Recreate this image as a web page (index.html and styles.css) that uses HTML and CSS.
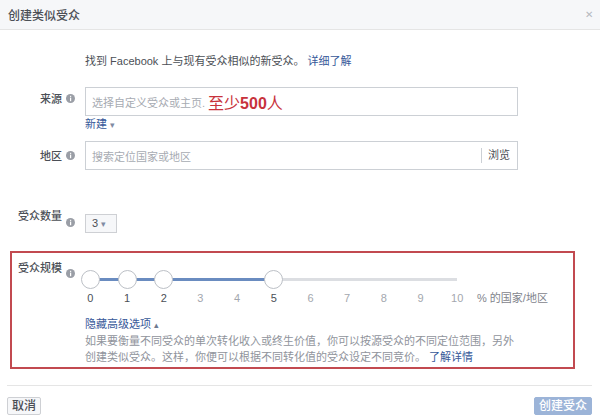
FILE: index.html
```html
<html>
<head>
  <meta charset="utf-8">
  <link rel="stylesheet" href="styles.css">
</head>
<body>
<div class="dialog">
  <div class="header">
    <span class="title">创建类似受众</span>
    <span class="close">&#x2715;</span>
  </div>

  <div class="content">
    <p class="intro">找到 Facebook 上与现有受众相似的新受众。 <a class="link">详细了解</a></p>

    <div class="row row-source">
      <div class="label">来源</div>
      <div class="info-col"><svg class="info" viewBox="0 0 9 9"><circle cx="4.5" cy="4.5" r="4.5" fill="#9a9ea6"/><rect x="4" y="3.6" width="1.2" height="3.6" fill="#fff"/><rect x="4" y="1.8" width="1.2" height="1.1" fill="#fff"/></svg></div>
      <div class="field">
        <div class="input"><span class="placeholder">选择自定义受众或主页.</span><span class="note">至少<b>500</b>人</span></div>
        <div class="new">新建 <span class="caret">&#9662;</span></div>
      </div>
    </div>

    <div class="row row-region">
      <div class="label">地区</div>
      <div class="info-col"><svg class="info" viewBox="0 0 9 9"><circle cx="4.5" cy="4.5" r="4.5" fill="#9a9ea6"/><rect x="4" y="3.6" width="1.2" height="3.6" fill="#fff"/><rect x="4" y="1.8" width="1.2" height="1.1" fill="#fff"/></svg></div>
      <div class="field">
        <div class="input"><span class="placeholder">搜索定位国家或地区</span><span class="browse">浏览</span></div>
      </div>
    </div>

    <div class="row row-count">
      <div class="label">受众数量</div>
      <div class="info-col"><svg class="info" viewBox="0 0 9 9"><circle cx="4.5" cy="4.5" r="4.5" fill="#9a9ea6"/><rect x="4" y="3.6" width="1.2" height="3.6" fill="#fff"/><rect x="4" y="1.8" width="1.2" height="1.1" fill="#fff"/></svg></div>
      <div class="field">
        <div class="select">3 <span class="caret">&#9662;</span></div>
      </div>
    </div>

    <div class="box">
      <div class="row row-size">
        <div class="label">受众规模</div>
        <div class="info-col"><svg class="info" viewBox="0 0 9 9"><circle cx="4.5" cy="4.5" r="4.5" fill="#9a9ea6"/><rect x="4" y="3.6" width="1.2" height="3.6" fill="#fff"/><rect x="4" y="1.8" width="1.2" height="1.1" fill="#fff"/></svg></div>
        <div class="field">
          <div class="slider-wrap">
            <div class="slider">
              <div class="knobs">
                <span class="cell"><i class="knob"></i></span>
                <span class="cell"><i class="knob"></i></span>
                <span class="cell"><i class="knob"></i></span>
                <span class="cell"></span>
                <span class="cell"></span>
                <span class="cell"><i class="knob"></i></span>
                <span class="cell"></span>
                <span class="cell"></span>
                <span class="cell"></span>
                <span class="cell"></span>
                <span class="cell"></span>
              </div>
              <div class="ticks">
                <span class="on">0</span><span class="on">1</span><span class="on">2</span><span>3</span><span>4</span><span class="on">5</span><span>6</span><span>7</span><span>8</span><span>9</span><span>10</span>
              </div>
            </div>
            <div class="unit">% 的国家/地区</div>
          </div>
          <div class="toggle">隐藏高级选项 <span class="caret-up">&#9652;</span></div>
          <p class="advanced">如果要衡量不同受众的单次转化收入或终生价值，你可以按源受众的不同定位范围，另外<br>创建类似受众。这样，你便可以根据不同转化值的受众设定不同竞价。 <a class="link">了解详情</a></p>
        </div>
      </div>
    </div>
  </div>

  <div class="footer">
    <button class="btn btn-cancel">取消</button>
    <button class="btn btn-create">创建受众</button>
  </div>
</div>
</body>
</html>
```

FILE: styles.css
```css
body{
    margin: 0;
    background: #fff;
    font-family: "Liberation Sans", "Noto Sans CJK SC", sans-serif;
    font-size: 11px;
    color: #4b4f56;
}
.dialog{
    width: 600px;
    height: 416px;
    overflow: hidden;
}
.header{
    height: 29px;
    background: #f6f7f9;
    border-bottom: 1px solid #e5e5e5;
    display: flex;
    justify-content: space-between;
    align-items: center;
    padding: 0 8px;
}
.title{
    font-size: 12px;
    font-weight: 500;
    color: #4b4f56;
}
.close{
    font-size: 10px;
    color: #b5b9bf;
    margin-right: -1px;
}
.link{
    color: #365899;
}
.intro{
    margin: 23px 0 0 85px;
    line-height: 16px;
    color: #4b4f56;
}
.row{
    display: flex;
}
.label{
    width: 62px;
    text-align: right;
    font-weight: 500;
    color: #4b4f56;
    line-height: 16px;
}
.info-col{
    width: 19px;
    padding-left: 4px;
}
.info{
    display: block;
    width: 9px;
    height: 9px;
}
.field{
    flex: none;
}
.input{
    width: 419px;
    height: 27px;
    border: 1px solid #ccd0d5;
    padding: 0 6px 0 6px;
    display: flex;
    align-items: center;
}
.placeholder{
    color: #a7abb2;
    flex: 1;
}
.note{
    color: #c8323c;
    font-size: 16px;
    margin-left: 3px;
}
.note b{
    font-weight: bold;
}

.row-source{
    margin-top: 18px;
}
.row-source .label{
    padding-top: 4px;
}
.row-source .info{
    margin-top: 7px;
}
.row-source .input .placeholder{
    flex: none;
}
.new{
    color: #365899;
    line-height: 14px;
    margin-top: 1px;
}
.caret{
    font-size: 9px;
    color: #7f8ba3;
}

.row-region{
    margin-top: 9px;
}
.row-region .label{
    padding-top: 7px;
}
.row-region .info{
    margin-top: 10px;
}
.browse{
    border-left: 1px solid #ccd0d5;
    padding-left: 6px;
    line-height: 15px;
    color: #4b4f56;
    margin-right: 1px;
}

.row-count{
    margin-top: 38px;
}
.row-count .info{
    margin-top: 10px;
}
.select{
    margin-top: 6px;
    width: 24px;
    height: 17px;
    line-height: 17px;
    border: 1px solid #ced0d4;
    background: #f6f7f9;
    padding-left: 6px;
    font-size: 11px;
}

.box{
    margin: 18px 25px 0 10px;
    border: 2px solid #c24a50;
    padding: 7px 0 2px 0;
}
.box .label{
    width: 50px;
}
.row-size .info{
    margin-top: 9px;
}
.slider-wrap{
    display: flex;
    align-items: flex-end;
    margin-left: -13px;
    margin-top: 10px;
}
.slider{
    width: 404px;
}
.knobs{
    display: grid;
    grid-template-columns: repeat(11, 36.7px);
    height: 18px;
    background:
        linear-gradient(#6a8cc0, #6a8cc0) no-repeat 18px 8px / 184px 3px,
        linear-gradient(#dcdee2, #dcdee2) no-repeat 18px 8px / 367px 3px;
}
.cell{
    display: flex;
    justify-content: center;
}
.knob{
    display: block;
    width: 17px;
    height: 17px;
    border-radius: 50%;
    background: #fff;
    border: 1px solid #bcc0c6;
}
.ticks{
    display: grid;
    grid-template-columns: repeat(11, 36.7px);
    margin-top: 3px;
    line-height: 14px;
    text-align: center;
    color: #a3a7ae;
}
.ticks .on{
    color: #4b4f56;
}
.unit{
    line-height: 14px;
    color: #7f848c;
    padding-left: 1px;
}
.toggle{
    margin-top: 11px;
    color: #365899;
    line-height: 16px;
}
.caret-up{
    font-size: 9px;
    color: #6f7a90;
}
.advanced{
    margin: 0;
    line-height: 16px;
    color: #90949c;
    white-space: nowrap;
}

.footer{
    margin: 16px 8px 0 7px;
    border-top: 1px solid #e5e5e5;
    padding-top: 11px;
    display: flex;
    justify-content: space-between;
}
.btn{
    font-family: "Liberation Sans", "Noto Sans CJK SC", sans-serif;
    font-size: 12px;
    font-weight: 500;
    height: 18px;
    line-height: 16px;
    padding: 0 4px;
    border-radius: 2px;
}
.btn-cancel{
    background: #f6f7f9;
    border: 1px solid #ced0d4;
    color: #4b4f56;
}
.btn-create{
    background: #9cb4d8;
    border: 1px solid #9cb4d8;
    color: #fff;
}
```
